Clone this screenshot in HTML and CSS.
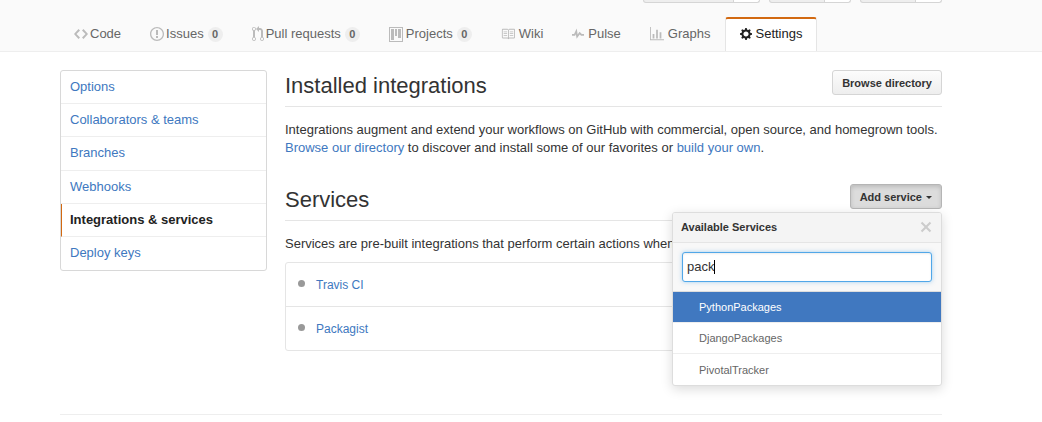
FILE: index.html
```html
<!DOCTYPE html>
<html lang="en">
<head>
<meta charset="utf-8">
<title>Installed integrations</title>
<link rel="stylesheet" href="styles.css">
</head>
<body>
<header class="repo-head">
  <div class="container">
    <div class="social" aria-hidden="true">
      <div class="social-item"><span class="social-button watch"></span><span class="social-count"></span></div>
      <div class="social-item"><span class="social-button star"></span><span class="social-count"></span></div>
      <div class="social-item"><span class="social-button fork"></span><span class="social-count"></span></div>
    </div>
    <nav class="tabs" aria-label="Repository">
      <a class="tab" href="#"><svg class="icon" width="14" height="16" viewBox="0 0 14 16"><path d="M9.5 3L8 4.5 11.5 8 8 11.5 9.5 13 14 8 9.5 3zm-5 0L0 8l4.5 5L6 11.5 2.5 8 6 4.5 4.5 3z"/></svg>Code</a>
      <a class="tab" href="#"><svg class="icon" width="14" height="16" viewBox="0 0 14 16"><path d="M7 2.3c3.14 0 5.7 2.56 5.7 5.7s-2.56 5.7-5.7 5.7A5.71 5.71 0 0 1 1.3 8c0-3.14 2.56-5.7 5.7-5.7zM7 1C3.14 1 0 4.14 0 8s3.14 7 7 7 7-3.14 7-7-3.14-7-7-7zm1 3H6v5h2V4zm0 6H6v2h2v-2z"/></svg>Issues <span class="counter">0</span></a>
      <a class="tab" href="#"><svg class="icon" width="12" height="16" viewBox="0 0 12 16"><path d="M11 11.28V5c-.03-.78-.34-1.47-.94-2.06C9.46 2.35 8.78 2.03 8 2H7V0L4 3l3 3V4h1c.27.02.48.11.69.31.21.2.3.42.31.69v6.28A1.993 1.993 0 0 0 10 15a1.993 1.993 0 0 0 1-3.72zm-1 2.92c-.66 0-1.2-.55-1.2-1.2 0-.65.55-1.2 1.2-1.2.65 0 1.2.55 1.2 1.2 0 .65-.55 1.2-1.2 1.2zM4 3c0-1.11-.89-2-2-2a1.993 1.993 0 0 0-1 3.72v6.56A1.993 1.993 0 0 0 2 15a1.993 1.993 0 0 0 1-3.72V4.72c.59-.34 1-.98 1-1.72zm-.8 10c0 .66-.55 1.2-1.2 1.2-.65 0-1.2-.55-1.2-1.2 0-.65.55-1.2 1.2-1.2.65 0 1.2.55 1.2 1.2zM2 4.2C1.34 4.2.8 3.65.8 3c0-.65.55-1.2 1.2-1.2.65 0 1.2.55 1.2 1.2 0 .65-.55 1.2-1.2 1.2z"/></svg>Pull requests <span class="counter">0</span></a>
      <a class="tab" href="#"><svg class="icon" width="15" height="15" viewBox="0 0 15 15"><path fill-rule="evenodd" d="M0 0h14v15H0zM1 1v13h12V1zM2 2h3v11H2zM6 2h2v7H6zM9 2h3v9H9z"/></svg>Projects <span class="counter">0</span></a>
      <a class="tab" href="#"><svg class="icon small" width="14" height="14" viewBox="0 0 16 16"><path d="M3 5h4v1H3V5zm0 3h4V7H3v1zm0 2h4V9H3v1zm11-5h-4v1h4V5zm0 2h-4v1h4V7zm0 2h-4v1h4V9zm2-6v9c0 .55-.45 1-1 1H9.5l-1 1-1-1H2c-.55 0-1-.45-1-1V3c0-.55.45-1 1-1h5.5l1 1 1-1H15c.55 0 1 .45 1 1zm-8 .5L7.5 3H2v9h6V3.5zm7-.5H9.5l-.5.5V12h6V3z"/></svg>Wiki</a>
      <a class="tab" href="#"><svg class="icon small" width="12" height="14" viewBox="0 0 14 16"><path d="M11.5 8L8.8 5.4 6.6 8.5 5.5 1.6 2.38 8H0v2h3.6l.9-1.8.9 5.4L9 8.5l1.6 1.5H14V8h-2.5z"/></svg>Pulse</a>
      <a class="tab" href="#"><svg class="icon small" width="14" height="14" viewBox="0 0 16 16"><path d="M16 14v1H0V0h1v14h15zM5 13H3V8h2v5zm4 0H7V3h2v10zm4 0h-2V6h2v7z"/></svg>Graphs</a>
      <a class="tab selected" href="#" aria-current="page"><svg class="icon small" width="12" height="14" viewBox="0 0 14 16"><path d="M14 8.77v-1.6l-1.94-.64-.45-1.09.88-1.84-1.13-1.13-1.81.91-1.09-.45-.69-1.92h-1.6l-.63 1.94-1.11.45-1.84-.88-1.13 1.13.91 1.81-.45 1.09L0 7.23v1.59l1.94.64.45 1.09-.88 1.84 1.13 1.13 1.81-.91 1.09.45.69 1.92h1.59l.63-1.94 1.11-.45 1.84.88 1.13-1.13-.92-1.81.47-1.09L14 8.75v.02zM7 11c-1.66 0-3-1.34-3-3s1.34-3 3-3 3 1.34 3 3-1.34 3-3 3z"/></svg>Settings</a>
    </nav>
  </div>
</header>

<div class="container layout">
  <nav class="menu" aria-label="Settings">
    <a class="menu-item" href="#">Options</a>
    <a class="menu-item" href="#">Collaborators &amp; teams</a>
    <a class="menu-item" href="#">Branches</a>
    <a class="menu-item" href="#">Webhooks</a>
    <a class="menu-item current" href="#" aria-current="page">Integrations &amp; services</a>
    <a class="menu-item" href="#">Deploy keys</a>
  </nav>

  <main class="content">
    <section class="section">
      <div class="subhead">
        <h2 class="heading">Installed integrations</h2>
        <button class="button" type="button">Browse directory</button>
      </div>
      <p class="text">Integrations augment and extend your workflows on GitHub with commercial, open source, and homegrown tools. <a href="#">Browse our directory</a> to discover and install some of our favorites or <a href="#">build your own</a>.</p>
    </section>

    <section class="section">
      <div class="subhead">
        <h2 class="heading">Services</h2>
        <div class="dropdown">
          <button class="button active" type="button" aria-expanded="true">Add service<span class="caret"></span></button>
          <div class="popup">
            <div class="popup-head">
              <span>Available Services</span>
              <button class="close" type="button" aria-label="Close"><svg class="close-icon" width="12" height="16" viewBox="0 0 12 16"><path d="M7.48 8l3.75 3.75-1.48 1.48L6 9.48l-3.75 3.75-1.48-1.48L4.52 8 .77 4.25l1.48-1.48L6 6.52l3.75-3.75 1.48 1.48z"/></svg></button>
            </div>
            <div class="popup-filter">
              <input class="filter" type="text" aria-label="Filter services" value="pack">
              <span class="text-cursor"></span>
            </div>
            <div class="options">
              <a class="option highlighted" href="#">PythonPackages</a>
              <a class="option" href="#">DjangoPackages</a>
              <a class="option" href="#">PivotalTracker</a>
            </div>
          </div>
        </div>
      </div>
      <p class="text">Services are pre-built integrations that perform certain actions when</p>
      <ul class="services">
        <li class="service"><span class="dot"></span><a href="#">Travis CI</a></li>
        <li class="service"><span class="dot"></span><a href="#">Packagist</a></li>
      </ul>
    </section>
  </main>
</div>
<footer class="container"><div class="footer"></div></footer>
</body>
</html>
```

FILE: styles.css
```css
* {
  box-sizing: border-box;
}

body {
  margin: 0;
  background: #fff;
  color: #333;
  font: 13px/18px "Liberation Sans", Arial, sans-serif;
}

a {
  color: #4078c0;
  text-decoration: none;
}

button,
input {
  font-family: inherit;
}

.container {
  padding: 0 100px 0 60px;
}

.repo-head {
  background: #fafafa;
  border-bottom: 1px solid #eee;
}

.social {
  display: flex;
  justify-content: flex-end;
  gap: 9px;
  height: 3px;
}

.social-item {
  display: flex;
}

.social-button,
.social-count {
  border: 1px solid #d5d5d5;
  border-top: 0;
}

.social-button {
  background: #eee;
  border-radius: 0 0 0 3px;
}

.watch {
  width: 91px;
}

.star,
.fork {
  width: 56px;
}

.social-count {
  width: 26px;
  background: #fff;
  border-left: 0;
  border-radius: 0 0 3px 0;
}

.tabs {
  display: flex;
  padding-top: 14px;
}

.tab {
  display: flex;
  align-items: center;
  height: 34px;
  margin-left: -1px;
  padding: 0 14px 2px;
  border: 1px solid transparent;
  border-width: 2px 1px 0;
  color: #666;
  white-space: nowrap;
}

.tab.selected {
  background: #fff;
  border-color: #d26911 #e5e5e5 transparent;
  border-radius: 3px 3px 0 0;
  color: #222;
}

.icon {
  fill: #bbb;
  margin-right: 2px;
}

.icon.small {
  margin-right: 4px;
}

.selected .icon {
  fill: #222;
}

.counter {
  min-width: 15px;
  margin-left: 4px;
  padding: 2px 4px;
  border-radius: 20px;
  background: #eee;
  font-size: 11px;
  font-weight: bold;
  line-height: 11px;
  text-align: center;
}

.layout {
  display: grid;
  grid-template-columns: 207px 1fr;
  gap: 18px;
  align-items: start;
  padding-top: 18px;
}

.menu {
  display: grid;
  grid-auto-rows: 1fr;
  min-height: 201px;
  border: 1px solid #d8d8d8;
  border-radius: 3px;
}

.menu-item {
  display: flex;
  align-items: center;
  padding: 0 9px;
  border-bottom: 1px solid #eee;
}

.menu-item:last-child {
  border-bottom: 0;
}

.menu-item.current {
  padding-left: 8px;
  border-left: 1px solid #d26911;
  color: #222;
  font-weight: bold;
}

.section {
  margin-bottom: 27px;
}

.subhead {
  display: flex;
  justify-content: space-between;
  align-items: flex-start;
  height: 37px;
  margin-bottom: 14px;
  border-bottom: 1px solid #e5e5e5;
}

.heading {
  margin: 0;
  font-size: 22px;
  font-weight: normal;
  line-height: 31px;
}

.button {
  height: 25px;
  padding: 0 9px;
  border: 1px solid #d5d5d5;
  border-radius: 3px;
  background: linear-gradient(#fcfcfc, #eee);
  color: #333;
  font-size: 11px;
  font-weight: bold;
  line-height: 20px;
}

.button.active {
  background: #dcdcdc;
  border-color: #b5b5b5;
  box-shadow: inset 0 2px 4px rgba(0, 0, 0, 0.15);
}

.caret {
  display: inline-block;
  margin-left: 4px;
  border: 3px solid transparent;
  border-top-color: #333;
  border-bottom: 0;
  vertical-align: middle;
}

.text {
  margin: 0;
}

.dropdown {
  position: relative;
}

.popup {
  position: absolute;
  top: 28px;
  right: 0;
  width: 270px;
  overflow: hidden;
  border: 1px solid #ddd;
  border-radius: 3px;
  background: #fff;
  box-shadow: 0 3px 12px rgba(0, 0, 0, 0.15);
  font-size: 11px;
}

.popup-head {
  display: flex;
  justify-content: space-between;
  align-items: center;
  height: 30px;
  padding: 0 9px 1px 8px;
  border-bottom: 1px solid #e5e5e5;
  background: #f4f4f4;
  font-weight: bold;
}

.close {
  display: flex;
  padding: 0;
  border: 0;
  background: none;
}

.close-icon {
  fill: #ccc;
}

.popup-filter {
  position: relative;
  padding: 9px;
  border-bottom: 1px solid #ddd;
  background: #f8f8f8;
}

.filter {
  display: block;
  width: 100%;
  height: 30px;
  padding: 0 4px 2px;
  border: 1px solid #51a7e8;
  border-radius: 3px;
  outline: none;
  background: #fff;
  box-shadow: inset 0 1px 2px rgba(0, 0, 0, 0.08), 0 0 4px rgba(81, 167, 232, 0.5);
  color: #333;
  font-size: 13px;
}

.text-cursor {
  position: absolute;
  top: 17px;
  left: 41px;
  width: 1px;
  height: 14px;
  background: #000;
}

.options {
  display: grid;
  grid-auto-rows: 1fr;
  min-height: 93px;
}

.option {
  display: flex;
  align-items: center;
  padding: 0 8px 0 26px;
  border-bottom: 1px solid #eee;
  color: #666;
}

.option:last-child {
  border-bottom: 0;
}

.option.highlighted {
  background: #4078c0;
  color: #fff;
}

.services {
  margin: 9px 0 0;
  padding: 0;
  border: 1px solid #e5e5e5;
  border-radius: 3px;
  list-style: none;
  font-size: 12px;
}

.service {
  box-sizing: content-box;
  display: flex;
  align-items: center;
  gap: 11px;
  height: 43px;
  padding: 0 12px;
}

.service + .service {
  border-top: 1px solid #e5e5e5;
}

.dot {
  width: 7px;
  height: 7px;
  margin-bottom: 2px;
  border-radius: 50%;
  background: #999;
}

.footer {
  margin-top: 36px;
  border-top: 1px solid #eee;
}
```
